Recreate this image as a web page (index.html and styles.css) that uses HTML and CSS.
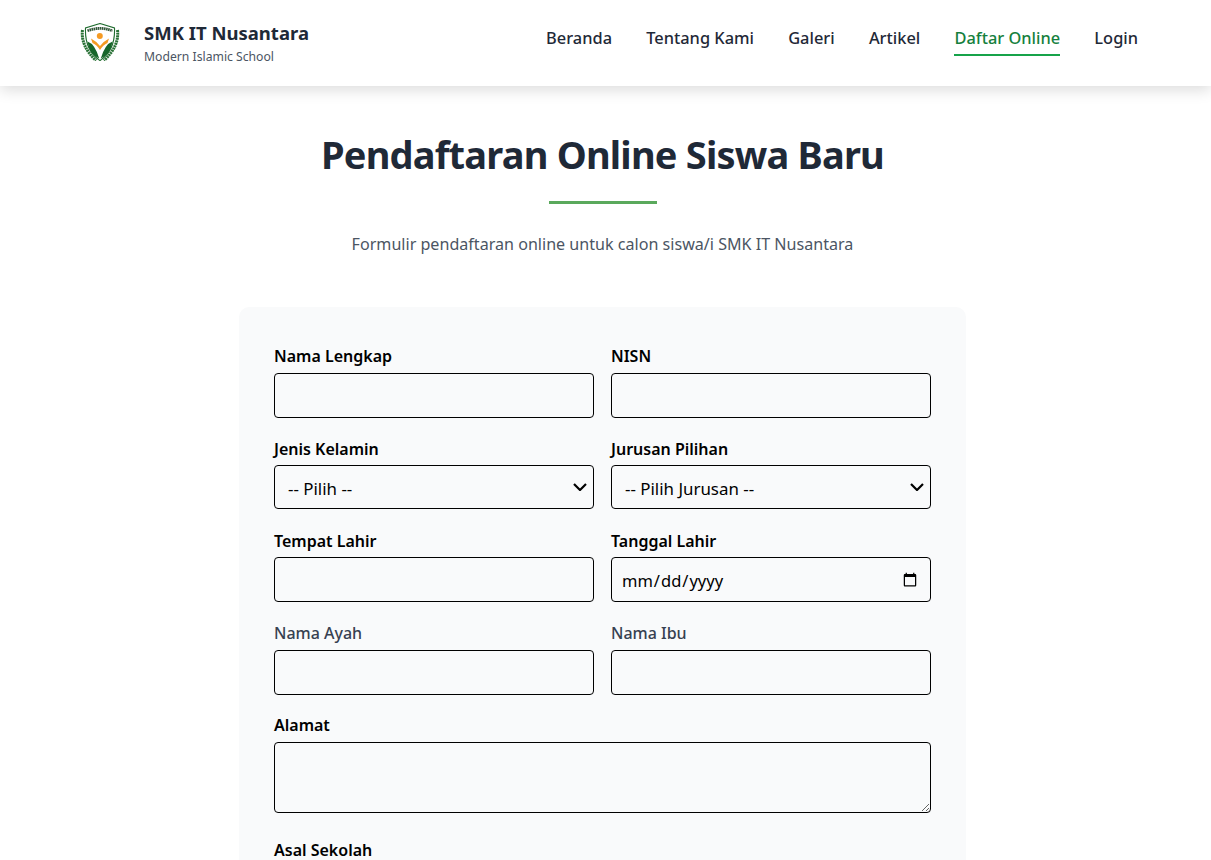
FILE: index.html
```html
<!DOCTYPE html>
<html lang="id">
<head>
  <meta charset="UTF-8" />
  <meta name="viewport" content="width=device-width, initial-scale=1.0"/>
  <title>Pendaftaran Online - SMK IT Nusantara</title>
  <link rel="stylesheet" href="styles.css">
</head>
<body>
  <header class="site-header">
    <div class="brand">
      <svg class="brand-logo" viewBox="0 0 40 38" aria-hidden="true">
        <path d="M2.5 7 Q0.5 23 16 37.5 M37.5 7 Q39.5 23 24 37.5" fill="none" stroke="#2a7237" stroke-width="3" stroke-dasharray="2 0.6"/>
        <path d="M20 0.5 L34.5 5 Q35.5 27 20 37.6 Q4.5 27 5.5 5 Z" fill="#fff" stroke="#1f6b2e" stroke-width="1.1"/>
        <path d="M7.5 7.8 Q20 3 32.5 7.8" fill="none" stroke="#33573a" stroke-width="2.8" stroke-dasharray="1.6 0.5"/>
        <circle cx="19.8" cy="13" r="3" fill="#f59a23"/>
        <path d="M11 15.5 Q16 18 20 23 Q24 18 29 15.5 L27.5 20 Q23 22 20 27 Q17 22 12.5 20 Z" fill="#f59a23"/>
        <path d="M7.5 18.5 Q15 21 19.2 35.5 Q9 31 7.5 18.5 Z M32.5 18.5 Q25 21 20.8 35.5 Q31 31 32.5 18.5 Z" fill="#17652a"/>
      </svg>
      <div class="brand-text">
        <div class="brand-name">SMK IT Nusantara</div>
        <div class="brand-tagline">Modern Islamic School</div>
      </div>
    </div>
    <nav class="main-nav">
      <a href="#">Beranda</a>
      <a href="#">Tentang Kami</a>
      <a href="#">Galeri</a>
      <a href="#">Artikel</a>
      <a href="#" class="active">Daftar Online</a>
      <a href="#">Login</a>
    </nav>
  </header>

  <main class="page">
    <h1>Pendaftaran Online Siswa Baru</h1>
    <div class="title-rule"></div>
    <p class="lead">Formulir pendaftaran online untuk calon siswa/i SMK IT Nusantara</p>

    <form class="form-card">
      <div class="field">
        <label>Nama Lengkap</label>
        <input type="text">
      </div>
      <div class="field">
        <label>NISN</label>
        <input type="text">
      </div>
      <div class="field">
        <label>Jenis Kelamin</label>
        <select><option>-- Pilih --</option></select>
      </div>
      <div class="field">
        <label>Jurusan Pilihan</label>
        <select><option>-- Pilih Jurusan --</option></select>
      </div>
      <div class="field">
        <label>Tempat Lahir</label>
        <input type="text">
      </div>
      <div class="field">
        <label>Tanggal Lahir</label>
        <input type="date">
      </div>
      <div class="field">
        <label class="muted">Nama Ayah</label>
        <input type="text">
      </div>
      <div class="field">
        <label class="muted">Nama Ibu</label>
        <input type="text">
      </div>
      <div class="field wide">
        <label>Alamat</label>
        <textarea rows="3"></textarea>
      </div>
      <div class="field wide">
        <label>Asal Sekolah</label>
        <input type="text">
      </div>
    </form>
  </main>
</body>
</html>
```
FILE: styles.css
```css
* {
  box-sizing: border-box;
}

html, body {
  height: 860px;
  overflow: hidden;
}

body {
  margin: 0;
  font-family: "Noto Sans", "Open Sans", sans-serif;
  color: #1f2937;
  background: #ffffff;
}

.site-header {
  height: 86px;
  padding: 0 73px 0 80px;
  display: flex;
  justify-content: space-between;
  align-items: center;
  background: #ffffff;
  box-shadow: 0 4px 14px rgba(0, 0, 0, 0.14);
}

.brand {
  display: flex;
  align-items: center;
  gap: 24px;
  margin-top: 4px;
}

.brand-logo {
  width: 40px;
  height: 38px;
  margin-bottom: 7px;
}

.brand-name {
  font-size: 18.5px;
  font-weight: 700;
  line-height: 24px;
}

.brand-tagline {
  font-size: 12.2px;
  line-height: 24px;
  color: #4b5563;
}

.main-nav {
  display: flex;
  gap: 34.2px;
  margin-bottom: 10px;
}

.main-nav a {
  padding: 6px 0 4px;
  font-size: 16.4px;
  font-weight: 500;
  line-height: 24px;
  color: #1f2937;
  text-decoration: none;
  border-bottom: 2px solid transparent;
}

.main-nav a.active {
  color: #15803d;
  border-bottom-color: #16a34a;
}

.page {
  width: 1205px;
  padding-top: 38px;
}

h1 {
  margin: 0;
  font-size: 38px;
  font-weight: 700;
  line-height: 60px;
  letter-spacing: -0.8px;
  text-align: center;
  color: #1f2937;
}

.title-rule {
  width: 108px;
  height: 3px;
  margin: 17px auto 0;
  background: #5aa95c;
}

.lead {
  margin: 28px 0 0;
  font-size: 16.1px;
  line-height: 24px;
  text-align: center;
  color: #4b5563;
}

.form-card {
  width: 727px;
  margin: 51px auto 0;
  padding: 37.4px 35px;
  display: grid;
  grid-template-columns: 320px 320px;
  column-gap: 17px;
  row-gap: 18.9px;
  background: #f9fafb;
  border-radius: 10px;
}

.field {
  display: flex;
  flex-direction: column;
}

.field.wide {
  grid-column: 1 / 3;
}

label {
  font-size: 16px;
  font-weight: 600;
  line-height: 24px;
  margin-bottom: 4.5px;
  color: #000000;
}

label.muted {
  font-weight: 500;
  color: #374151;
}

input, select, textarea {
  width: 100%;
  height: 45px;
  padding: 8px 10px;
  font-family: inherit;
  font-size: 16px;
  color: #000000;
  background-color: #f9fafb;
  border: 1px solid #000000;
  border-radius: 4px;
}

input[type="date"] {
  padding: 9px 10px 7px 9px;
  font-size: 16.5px;
}

select {
  height: 44px;
  margin-bottom: 0.5px;
  padding: 10px 10px 7px 13px;
  font-size: 16.9px;
  appearance: none;
  background-image: url("data:image/svg+xml,%3Csvg xmlns='http://www.w3.org/2000/svg' viewBox='0 0 14 8'%3E%3Cpath d='M1 1l6 6 6-6' fill='none' stroke='%23000' stroke-width='2.2'/%3E%3C/svg%3E");
  background-repeat: no-repeat;
  background-position: right 6px center;
  background-size: 14px 8px;
}

textarea {
  display: block;
  height: 71px;
  margin-bottom: 6.5px;
}
```
